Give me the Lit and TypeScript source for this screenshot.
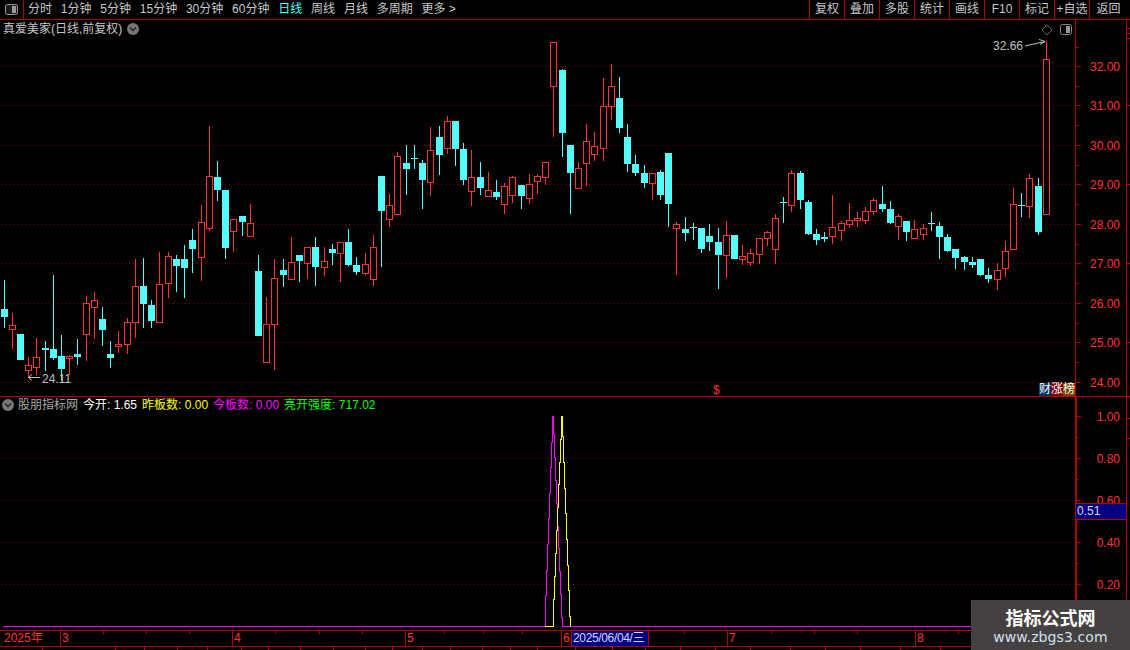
import { LitElement, html, css, svg } from "lit";
import { customElement } from "lit/decorators.js";

type C = [number, number, number, number, number, "r" | "c"];
const candles: C[] = [
  [4,280,309,317,328,"c"],[12,313,325,330,349,"r"],[20,334,334,360,360,"c"],[28,357,365,371,377,"r"],[36,338,357,368,375,"r"],
  [45,341,348,350,371,"c"],[53,275,349,358,360,"c"],[61,335,356,369,381,"c"],[69,355,356,359,375,"r"],[77,339,354,357,365,"c"],
  [86,296,303,335,361,"r"],[94,292,300,308,339,"r"],[102,307,319,330,346,"c"],[110,341,354,358,368,"c"],[118,331,344,347,353,"r"],
  [127,318,322,345,354,"r"],[135,259,286,323,338,"r"],[143,258,286,304,328,"c"],[151,300,305,321,328,"c"],[159,252,284,323,323,"r"],
  [168,252,256,284,298,"r"],[176,255,259,266,292,"c"],[184,245,259,268,298,"c"],[192,229,240,249,273,"c"],[201,205,222,258,281,"r"],
  [209,126,176,229,231,"r"],[217,161,177,190,201,"c"],[225,190,190,248,259,"c"],[233,219,219,232,252,"r"],[242,216,216,222,236,"c"],
  [250,204,223,237,237,"r"],[258,255,271,336,336,"c"],[266,297,324,363,363,"r"],[274,259,278,325,370,"r"],
  [283,259,270,275,287,"c"],[291,237,262,280,280,"r"],[299,255,255,261,282,"c"],[307,247,247,264,279,"r"],[315,237,247,267,286,"c"],
  [324,247,261,268,276,"r"],[332,244,249,253,265,"c"],[340,242,242,254,282,"r"],[348,229,242,265,266,"c"],[356,257,265,272,275,"c"],
  [365,253,264,274,275,"r"],[373,235,247,280,286,"r"],[381,176,176,211,267,"c"],[389,194,205,220,227,"r"],[397,152,156,215,215,"r"],
  [406,145,163,169,195,"c"],[414,145,158,158,169,"c"],[422,160,163,180,209,"c"],[430,127,150,183,196,"r"],[439,126,137,155,175,"c"],
  [447,116,121,149,154,"r"],[455,121,121,149,166,"c"],[463,143,149,180,185,"c"],[471,150,177,192,206,"r"],[480,162,177,188,195,"c"],
  [488,172,190,197,197,"r"],[496,180,192,197,200,"c"],[504,183,186,205,214,"r"],[512,176,177,196,203,"r"],[521,185,185,196,209,"c"],
  [529,174,184,199,204,"r"],[537,174,176,182,194,"r"],[545,162,162,178,185,"r"],[553,42,42,87,137,"r"],[562,69,70,133,157,"c"],
  [570,145,145,173,214,"c"],[578,162,168,189,189,"r"],[586,124,141,164,186,"r"],[594,132,146,155,161,"r"],[603,78,106,149,161,"r"],
  [611,64,86,107,120,"r"],[619,77,98,128,133,"c"],[627,124,137,164,172,"c"],[635,155,164,173,176,"c"],[644,165,173,183,188,"c"],
  [652,173,173,184,200,"r"],[660,170,172,195,200,"c"],[668,153,153,204,227,"c"],[676,222,224,229,275,"r"],[685,217,229,233,241,"c"],
  [693,223,227,227,240,"c"],[701,228,228,249,253,"c"],[709,224,236,242,251,"c"],[718,228,242,255,289,"c"],[726,221,235,256,278,"r"],
  [734,235,235,259,259,"c"],[742,245,256,260,265,"r"],[750,249,253,263,266,"r"],[759,238,238,255,264,"r"],[767,231,232,239,246,"r"],
  [775,214,218,250,264,"r"],[783,197,202,202,223,"c"],[791,170,173,206,212,"r"],[800,171,173,200,209,"c"],[808,200,202,234,235,"c"],
  [816,229,234,240,245,"c"],[824,232,237,239,242,"c"],[832,195,227,237,244,"r"],[841,221,223,231,241,"r"],[849,203,220,225,228,"r"],
  [857,212,218,221,227,"r"],[865,207,211,221,224,"r"],[873,198,200,212,215,"r"],[882,186,204,209,212,"c"],[890,201,209,223,224,"c"],
  [898,214,216,227,240,"r"],[906,221,221,232,241,"c"],[914,220,229,239,239,"r"],[923,224,228,235,240,"r"],[931,212,223,223,231,"c"],
  [939,222,226,237,259,"c"],[947,234,237,251,252,"c"],[955,249,249,258,269,"c"],[964,256,257,262,270,"c"],[972,257,262,265,268,"c"],
  [980,259,259,275,276,"c"],[988,268,275,279,283,"c"],[997,263,270,280,290,"r"],[1005,241,251,269,277,"r"],[1013,188,204,250,250,"r"],
  [1021,193,205,205,217,"c"],[1029,174,178,207,218,"r"],[1038,178,186,232,235,"c"],[1046,41,59,215,215,"r"],
];

const RED = "#ff3232";
const CYAN = "#54fcfc";
const LINE = "#b00000";
const GRID = "#8c0000";

function stairs(x0: number, xp: number, x1: number, top: number, base: number) {
  let d = `M${x0 + 0.5} ${base + 0.5}`;
  const n1 = xp - x0;
  for (let i = 1; i <= n1; i++) {
    const y = Math.round(base - ((i + 0.2) / (n1 + 0.2)) * (base - top));
    d += `V${y + 0.5}H${x0 + i + 0.5}`;
  }
  d += `V${top + 0.5}`;
  const n2 = x1 - xp;
  for (let i = 1; i <= n2; i++) {
    const y = Math.round(top + ((i - 0.2) / (n2 + 0.2)) * (base - top));
    d += `V${y + 0.5}H${xp + i + 0.5}`;
  }
  d += `V${base + 0.5}`;
  return d;
}

@customElement("app-root")
export class AppRoot extends LitElement {
  static styles = css`
    :host {
      display: block;
      width: 1130px;
      height: 650px;
      background: #000;
      overflow: hidden;
      position: relative;
      font-family: "Liberation Sans", "Noto Sans CJK SC", sans-serif;
      font-size: 12px;
      color: #c8c8c8;
    }
    .toolbar {
      display: flex;
      height: 19px;
      border-bottom: 1px solid #b00000;
      align-items: stretch;
      line-height: 19px;
    }
    .icon-cell {
      width: 23px;
      border-right: 1px solid #b00000;
      display: flex;
      align-items: center;
      justify-content: center;
    }
    .periods {
      display: flex;
      gap: 8.8px;
      padding-left: 4px;
    }
    .active { color: #54fcfc; }
    .tools { display: flex; margin-left: auto; }
    .tools span {
      width: 34px;
      border-left: 1px solid #b00000;
      text-align: center;
      white-space: nowrap;
    }
    .tools span:last-child { width: 37px; padding-right: 3px; }
    .panel { position: relative; }
    .main { height: 376px; border-bottom: 1px solid #b00000; }
    .sub { height: 233px; }
    svg { display: block; }
    .chart-text { font-family: "Liberation Sans", "Noto Sans CJK SC", sans-serif; font-size: 12px; }
    .legend {
      position: absolute;
      left: 3px;
      top: 2px;
      display: flex;
      align-items: center;
      gap: 5px;
      line-height: 14px;
    }
    .legend.low { left: 2px; top: 1px; gap: 0; }
    .legend.low .item { margin-left: 5px; }
    .legend.low .name { margin-left: 4px; color: #a8a8a8; }
    .white { color: #fff; }
    .yellow { color: #ffff00; }
    .magenta { color: #ff00ff; }
    .green { color: #00ff00; }
    .rank {
      position: absolute;
      right: 55px;
      bottom: 0;
      display: flex;
      color: #fff;
      line-height: 13px;
      height: 13px;
    }
    .rank span { width: 12px; text-align: center; }
    .rank .a { background: #003060; }
    .rank .b { background: #800000; }
    .rank .c { background: #804000; }
    .flag {
      position: absolute;
      left: 1076px;
      top: 106px;
      width: 50px;
      height: 17px;
      background: #000080;
      border-top: 1px solid #b00000;
      border-bottom: 1px solid #b00000;
      color: #d8d8f0;
      line-height: 15px;
      padding-left: 1px;
      box-sizing: border-box;
    }
    .timeaxis {
      position: relative;
      height: 15px;
      border-top: 1px solid #b00000;
      border-bottom: 1px solid #b00000;
      color: #ff3232;
      line-height: 15px;
    }
    .timeaxis .t { position: absolute; top: 0; height: 15px; border-left: 1px solid #b00000; padding-left: 1px; }
    .timeaxis .year { position: absolute; left: 4px; top: 0; }
    .timeaxis .date {
      position: absolute;
      top: 0;
      left: 571px;
      width: 78px;
      height: 15px;
      background: #000080;
      color: #d0d8ff;
      border-left: 1px solid #b00000;
      border-right: 1px solid #b00000;
      padding-left: 1px;
      box-sizing: border-box;
      white-space: nowrap;
      letter-spacing: -0.35px;
    }
    .tick { position: absolute; top: 0; width: 1px; height: 3px; background: #b00000; }
    .bottom { height: 3px; position: relative; }
    .bottom .tick { height: 4px; }
    .watermark {
      position: absolute;
      right: 0;
      bottom: 0;
      width: 159px;
      height: 50px;
      background: #454141;
      display: flex;
      flex-direction: column;
      align-items: center;
      justify-content: center;
      text-align: center;
    }
    .wm1 { color: #fff; font-weight: 700; font-size: 18px; line-height: 24px; font-family: "Noto Sans CJK SC", sans-serif; }
    .wm2 { color: #cfe0f2; font-size: 14px; line-height: 17px; font-family: "DejaVu Sans", sans-serif; letter-spacing: 0.1px; }
  `;

  private chevron() {
    return html`<svg width="12" height="12" viewBox="0 0 12 12">
      <circle cx="6" cy="6" r="6" fill="#777"></circle>
      <path d="M3 4.5 L6 7.5 L9 4.5" fill="none" stroke="#222" stroke-width="1.4"></path>
    </svg>`;
  }

  private hGrid(ys: number[]) {
    return ys.map(
      (y) => svg`<line x1="1" x2="1073" y1=${y + 0.5} y2=${y + 0.5} stroke=${GRID} stroke-dasharray="1 3"></line>`
    );
  }

  private axisLabels(rows: [string, number][]) {
    return rows.map(
      ([t, y]) => svg`<text class="chart-text" x="1120" y=${y + 4.5} text-anchor="end" fill=${RED}>${t}</text>`
    );
  }

  private renderCandles() {
    return candles.map(([x, hi, top, bot, lo, kind]) => {
      const col = kind === "r" ? RED : CYAN;
      const wick = svg`<line x1=${x + 0.5} x2=${x + 0.5} y1=${hi} y2=${lo} stroke=${col}></line>`;
      if (kind === "r") {
        return svg`${wick}<rect x=${x - 2.5} y=${top + 0.5} width="6" height=${Math.max(bot - top - 1, 1)} fill="#000" stroke=${col}></rect>`;
      }
      return svg`${wick}<rect x=${x - 3} y=${top} width="7" height=${Math.max(bot - top, 1)} fill=${col}></rect>`;
    });
  }

  private mainChart() {
    const prices = [32, 31, 30, 29, 28, 27, 26, 25, 24];
    const ys = [66, 105, 145, 184, 224, 263, 303, 342, 382];
    const half = [47, 86, 125, 165, 204, 244, 283, 323, 362];
    return html`<svg width="1130" height="376" viewBox="0 20 1130 376" shape-rendering="crispEdges">
      ${this.hGrid(ys)}
      ${this.renderCandles()}
      <line x1="1075.5" x2="1075.5" y1="20" y2="396" stroke=${LINE}></line>
      <line x1="1126.5" x2="1126.5" y1="20" y2="396" stroke=${LINE}></line>
      ${ys.map((y) => svg`<line x1="1076" x2="1081" y1=${y + 0.5} y2=${y + 0.5} stroke=${LINE}></line>`)}
      ${half.map((y) => svg`<line x1="1076" x2="1079" y1=${y + 0.5} y2=${y + 0.5} stroke=${LINE}></line>`)}
      ${[28, 33, 38, 105, 184, 263, 342].map((y) => svg`<line x1="1127" x2="1130" y1=${y + 0.5} y2=${y + 0.5} stroke=${LINE}></line>`)}
      ${this.axisLabels(prices.map((p, i) => [p.toFixed(2), ys[i]] as [string, number]))}
      <g shape-rendering="auto">
        <path d="M1047 25 L1052 30 L1047 35 L1042 30 Z" fill="none" stroke="#666"></path>
        <rect x="1060.5" y="24.5" width="11" height="10" rx="2" fill="none" stroke="#888"></rect>
        <rect x="1066" y="26" width="4" height="7" fill="#999"></rect>
        <path d="M1025 46 L1045 41.5 M1039 39.5 L1045 41.5 L1040 44.5" fill="none" stroke="#c0c0c0"></path>
        <path d="M40 377.5 H28.5 M32 374.5 L28.5 377.5 L32 380.5" fill="none" stroke="#c0c0c0"></path>
      </g>
      <text class="chart-text" x="993" y="49.5" fill="#c0c0c0">32.66</text>
      <text class="chart-text" x="42" y="382.5" fill="#c0c0c0">24.11</text>
      <text class="chart-text" x="713" y="394" fill=${RED}>$</text>
    </svg>`;
  }

  private subChart() {
    const ys = [458, 500, 542, 584];
    const ticks = [416, 458, 500, 542, 584];
    const minor = [437, 479, 521, 563, 605];
    return html`<svg width="1130" height="233" viewBox="0 397 1130 233" shape-rendering="crispEdges">
      ${this.hGrid(ys)}
      <path d="M3 626.5 H545" fill="none" stroke="#ff00ff"></path>
      <path d=${stairs(545, 553, 562, 416, 626)} fill="none" stroke="#ff00ff"></path>
      <path d="M562 626.5 H972" fill="none" stroke="#ff00ff"></path>
      <path d="M545 626.5 H553" fill="none" stroke="#ffff00"></path>
      <path d=${stairs(553, 562, 570, 416, 626)} fill="none" stroke="#ffff00"></path>
      <rect x="1075" y="397" width="2" height="233" fill=${LINE}></rect>
      <line x1="1126.5" x2="1126.5" y1="397" y2="600" stroke=${LINE}></line>
      ${ticks.map((y) => svg`<line x1="1077" x2="1081" y1=${y + 0.5} y2=${y + 0.5} stroke=${LINE}></line>`)}
      ${minor.map((y) => svg`<line x1="1077" x2="1079" y1=${y + 0.5} y2=${y + 0.5} stroke=${LINE}></line>`)}
      ${[418, 438].map((y) => svg`<line x1="1127" x2="1130" y1=${y + 0.5} y2=${y + 0.5} stroke=${LINE}></line>`)}
      ${this.axisLabels([["1.00", 416], ["0.80", 458], ["0.60", 500], ["0.40", 542], ["0.20", 584]])}
    </svg>`;
  }

  render() {
    const periods = ["分时", "1分钟", "5分钟", "15分钟", "30分钟", "60分钟", "日线", "周线", "月线", "多周期", "更多 >"];
    const tools = ["复权", "叠加", "多股", "统计", "画线", "F10", "标记", "+自选", "返回"];
    const months: [string, number][] = [["3", 60], ["4", 232], ["5", 405], ["6", 561], ["7", 727], ["8", 915]];
    const topTicks = [103, 146, 189, 275, 319, 362, 444, 483, 522, 684, 771, 814, 857, 958, 1001, 1044, 1087];
    const lowTicks = [42, 115, 144, 177, 207, 241, 268, 300, 333, 365, 392, 422, 450, 482, 510, 537, 575, 612, 645, 680, 715, 750, 790, 825, 860, 900, 940];
    return html`
      <div class="toolbar">
        <div class="icon-cell">
          <svg width="13" height="11" viewBox="0 0 13 11">
            <rect x="0.5" y="0.5" width="12" height="10" rx="2" fill="#1c1c1c" stroke="#999"></rect>
            <rect x="7" y="2" width="4" height="7" fill="#999"></rect>
          </svg>
        </div>
        <div class="periods">
          ${periods.map((p) => html`<span class=${p === "日线" ? "active" : ""}>${p}</span>`)}
        </div>
        <div class="tools">${tools.map((t) => html`<span>${t}</span>`)}</div>
      </div>
      <div class="panel main">
        ${this.mainChart()}
        <div class="legend"><span>真爱美家(日线,前复权)</span>${this.chevron()}</div>
        <div class="rank"><span class="a">财</span><span class="b">涨</span><span class="c">榜</span></div>
      </div>
      <div class="panel sub">
        ${this.subChart()}
        <div class="legend low">
          ${this.chevron()}
          <span class="name">股朋指标网</span>
          <span class="item white">今开: 1.65</span>
          <span class="item yellow">昨板数: 0.00</span>
          <span class="item magenta">今板数: 0.00</span>
          <span class="item green">亮开强度: 717.02</span>
        </div>
        <div class="flag">0.51</div>
      </div>
      <div class="timeaxis">
        <span class="year">2025年</span>
        ${months.map(([m, x]) => html`<span class="t" style="left:${x}px">${m}</span>`)}
        ${topTicks.map((x) => html`<i class="tick" style="left:${x}px"></i>`)}
        <span class="date">2025/06/04/三</span>
      </div>
      <div class="bottom">
        ${lowTicks.map((x) => html`<i class="tick" style="left:${x}px"></i>`)}
      </div>
      <div class="watermark">
        <div class="wm1">指标公式网</div>
        <div class="wm2">www.zbgs3.com</div>
      </div>
    `;
  }
}
